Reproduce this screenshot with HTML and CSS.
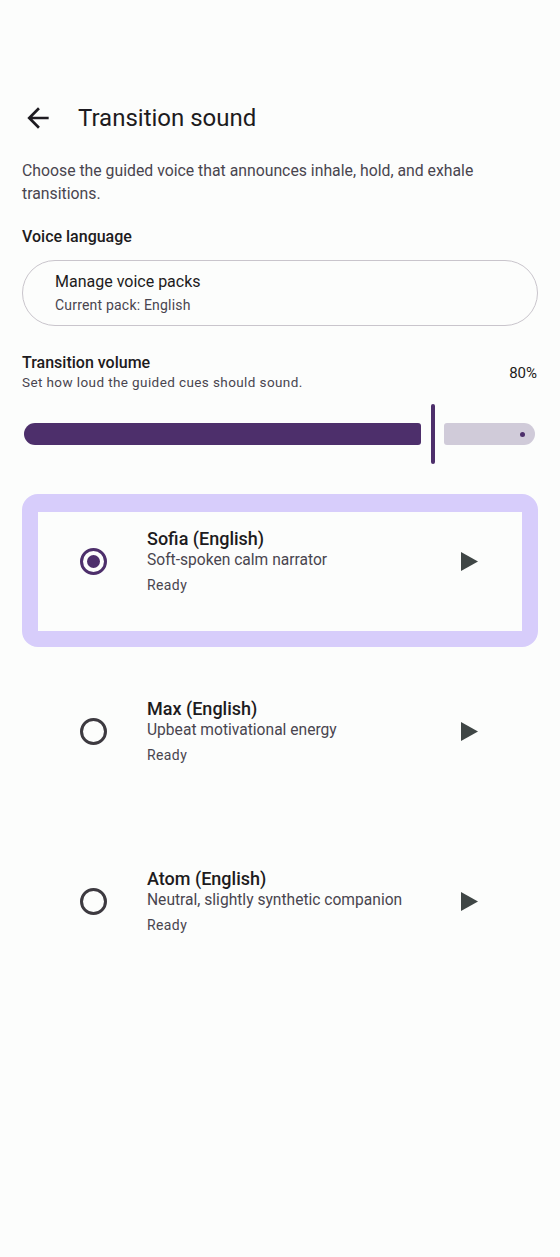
FILE: index.html
```html
<!doctype html>
<html lang="en">

<head>
	<meta charset="UTF-8">
	<meta name="viewport" content="width=device-width, initial-scale=1.0" />
	<title>Transition sound</title>
	<link rel="stylesheet" href="styles.css">
</head>

<body>
	<header class="top-bar">
		<svg class="back-icon" viewBox="0 0 24 24" aria-hidden="true">
			<path d="M20 11H7.83l5.59-5.59L12 4l-8 8 8 8 1.41-1.41L7.83 13H20v-2z" />
		</svg>
		<h1>Transition sound</h1>
	</header>

	<main class="content">
		<p class="intro">Choose the guided voice that announces inhale, hold, and exhale transitions.</p>

		<h2 class="section-title">Voice language</h2>
		<button class="pill-button">
			<span class="pill-title">Manage voice packs</span>
			<span class="pill-sub">Current pack: English</span>
		</button>

		<div class="volume-head">
			<div>
				<h2 class="section-title">Transition volume</h2>
				<p class="volume-sub">Set how loud the guided cues should sound.</p>
			</div>
			<span class="volume-value">80%</span>
		</div>

		<div class="slider">
			<div class="track-active"></div>
			<div class="handle"></div>
			<div class="track-inactive"><span class="stop-dot"></span></div>
		</div>

		<ul class="voice-list">
			<li class="voice selected">
				<div class="voice-inner">
					<span class="radio checked"></span>
					<div class="voice-text">
						<span class="voice-name">Sofia (English)</span>
						<span class="voice-desc">Soft-spoken calm narrator</span>
						<span class="voice-status">Ready</span>
					</div>
					<svg class="play-icon" viewBox="0 0 18 20" aria-hidden="true"><path d="M0 0L18 10L0 20z" /></svg>
				</div>
			</li>
			<li class="voice">
				<div class="voice-inner">
					<span class="radio"></span>
					<div class="voice-text">
						<span class="voice-name">Max (English)</span>
						<span class="voice-desc">Upbeat motivational energy</span>
						<span class="voice-status">Ready</span>
					</div>
					<svg class="play-icon" viewBox="0 0 18 20" aria-hidden="true"><path d="M0 0L18 10L0 20z" /></svg>
				</div>
			</li>
			<li class="voice">
				<div class="voice-inner">
					<span class="radio"></span>
					<div class="voice-text">
						<span class="voice-name">Atom (English)</span>
						<span class="voice-desc">Neutral, slightly synthetic companion</span>
						<span class="voice-status">Ready</span>
					</div>
					<svg class="play-icon" viewBox="0 0 18 20" aria-hidden="true"><path d="M0 0L18 10L0 20z" /></svg>
				</div>
			</li>
		</ul>
	</main>
</body>

</html>
```

FILE: styles.css
```css
:root {
	--bg: #fcfdfc;
	--on-surface: #1d1b20;
	--on-variant: #49454f;
	--outline: #c9c5cc;
	--primary: #4d2f6b;
	--track-off: #d0cbd9;
	--focus-ring: #d7cdfb;
	--play: #3f4645;
}

* {
	box-sizing: border-box;
	margin: 0;
	padding: 0;
}

body {
	background: var(--bg);
	color: var(--on-surface);
	font-family: Roboto, "Noto Sans", sans-serif;
	width: 560px;
	min-height: 1257px;
}

.top-bar {
	display: flex;
	align-items: center;
	height: 56px;
	margin-top: 90px;
	padding: 0 22px;
	gap: 24px;
}

.back-icon {
	width: 32px;
	height: 32px;
	fill: var(--on-surface);
}

.top-bar h1 {
	font-size: 24px;
	font-weight: 400;
	color: var(--on-surface);
}

.content {
	padding: 0 22px;
}

.intro {
	margin-top: 13px;
	font-size: 15.8px;
	line-height: 23px;
	color: var(--on-variant);
}

.section-title {
	font-size: 16px;
	font-weight: 500;
	line-height: 20px;
	color: var(--on-surface);
}

.intro + .section-title {
	margin-top: 20px;
	line-height: 24px;
}

.pill-button {
	display: flex;
	flex-direction: column;
	justify-content: center;
	width: 100%;
	height: 66px;
	margin-top: 11px;
	padding: 0 32px;
	background: transparent;
	border: 1.5px solid var(--outline);
	border-radius: 33px;
	text-align: left;
	font-family: inherit;
	gap: 2px;
}

.pill-title {
	font-size: 16px;
	line-height: 22px;
	color: var(--on-surface);
}

.pill-sub {
	font-size: 14px;
	line-height: 20px;
	letter-spacing: 0.2px;
	color: var(--on-variant);
}

.volume-head {
	display: flex;
	justify-content: space-between;
	align-items: center;
	margin-top: 27px;
}

.volume-sub {
	font-size: 13.5px;
	line-height: 18px;
	letter-spacing: 0.4px;
	color: var(--on-variant);
}

.volume-value {
	font-size: 15px;
	color: var(--on-surface);
	padding-right: 1px;
	margin-top: 2px;
}

.slider {
	display: flex;
	align-items: center;
	height: 60px;
	margin-top: 13px;
	padding: 0 3px 0 2px;
}

.track-active {
	width: 397px;
	height: 22px;
	background: var(--primary);
	border-radius: 11px 3px 3px 11px;
}

.handle {
	width: 4px;
	height: 60px;
	margin: 0 9px 0 10px;
	background: var(--primary);
	border-radius: 2px;
}

.track-inactive {
	flex: 1;
	height: 22px;
	display: flex;
	align-items: center;
	justify-content: flex-end;
	padding-right: 10px;
	background: var(--track-off);
	border-radius: 3px 11px 11px 3px;
}

.stop-dot {
	width: 5px;
	height: 5px;
	border-radius: 50%;
	background: var(--primary);
}

.voice-list {
	list-style: none;
	display: flex;
	flex-direction: column;
	gap: 17px;
	margin-top: 30px;
}

.voice {
	border: 17px solid transparent;
	border-width: 18px 16px 16px;
	border-radius: 16px;
}

.voice.selected {
	border-color: var(--focus-ring);
}

.voice-inner {
	display: flex;
	align-items: center;
	padding: 16px 44px 36px 42px;
	background: var(--bg);
}

.radio {
	flex: none;
	width: 27px;
	height: 27px;
	border: 3px solid #3d3a40;
	border-radius: 50%;
	display: flex;
	align-items: center;
	justify-content: center;
}

.radio.checked {
	border-color: var(--primary);
}

.radio.checked::after {
	content: "";
	width: 13px;
	height: 13px;
	border-radius: 50%;
	background: var(--primary);
}

.voice-text {
	flex: 1;
	display: flex;
	flex-direction: column;
	margin-left: 40px;
}

.voice-name {
	font-size: 18px;
	font-weight: 500;
	line-height: 22px;
	color: var(--on-surface);
}

.voice-desc {
	font-size: 15.6px;
	line-height: 21px;
	color: var(--on-variant);
}

.voice-status {
	margin-top: 4px;
	font-size: 14px;
	line-height: 20px;
	letter-spacing: 0.4px;
	color: var(--on-variant);
}

.play-icon {
	flex: none;
	width: 17px;
	height: 19px;
	fill: var(--play);
}
```
